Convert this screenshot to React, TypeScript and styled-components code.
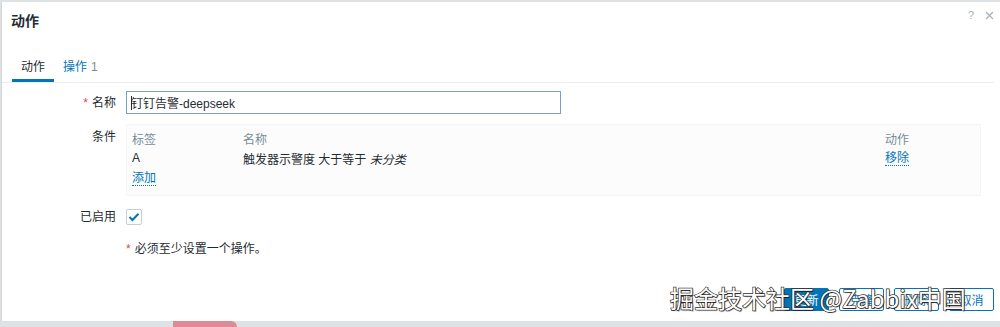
import React from 'react';
import styled, { createGlobalStyle } from 'styled-components';

const colors = {
  text: '#1f2c33',
  muted: '#768d99',
  link: '#0275b8',
  border: '#ebeef0',
  required: '#d64e4e',
};

const font = '"Liberation Sans", Arial, "Noto Sans CJK SC", sans-serif';

const GlobalStyle = createGlobalStyle`
  html, body {
    margin: 0;
    padding: 0;
    background: #dfe2e5;
  }
  body {
    font-family: ${font};
    font-size: 12px;
    color: ${colors.text};
  }
`;

const Page = styled.div`
  position: relative;
  width: 1000px;
  height: 327px;
  overflow: hidden;
  display: flex;
  flex-direction: column;
  background: #dfe2e5;
`;

const Dialog = styled.div`
  margin: 2px 0 0 1px;
  width: 999px;
  height: 319px;
  box-sizing: border-box;
  background: #fff;
  border-left: 1px solid #d2d6d9;
  display: flex;
  flex-direction: column;
`;

const Header = styled.div`
  height: 36px;
  display: flex;
  align-items: flex-start;
  justify-content: space-between;
  padding: 0 6px 0 9px;
`;

const Title = styled.h4`
  margin: 11px 0 0;
  font-size: 14px;
  line-height: 16px;
  font-weight: bold;
`;

const HeaderIcons = styled.div`
  display: flex;
  align-items: center;
  gap: 11px;
  margin-top: 7px;
  color: #a8b3b9;
  font-size: 11px;
`;

const TabBar = styled.div`
  display: flex;
  margin: 15px 6px 0 0;
  padding-left: 10px;
  border-bottom: 1px solid ${colors.border};
`;

const Tab = styled.div<{ $active?: boolean }>`
  padding: 6px 9px 4px;
  line-height: 16px;
  border-bottom: 3px solid ${(p) => (p.$active ? colors.link : 'transparent')};
  color: ${(p) => (p.$active ? colors.text : colors.link)};
`;

const Count = styled.span`
  color: ${colors.muted};
  margin-left: 4px;
`;

const Form = styled.div`
  display: flex;
  flex-direction: column;
  padding-top: 8px;
`;

const Row = styled.div<{ $gap?: number; $center?: boolean }>`
  display: flex;
  align-items: ${(p) => (p.$center ? 'center' : 'flex-start')};
  margin-bottom: ${(p) => p.$gap ?? 10}px;
`;

const Label = styled.div<{ $pt?: number }>`
  width: 114px;
  flex-shrink: 0;
  text-align: right;
  padding-right: 10px;
  padding-top: ${(p) => p.$pt ?? 0}px;
  line-height: 16px;
`;

const Star = styled.span`
  color: ${colors.required};
  margin-right: 4px;
`;

const Input = styled.div`
  width: 435px;
  height: 23px;
  box-sizing: border-box;
  border: 1px solid #7aa0c0;
  padding: 0 4px;
  display: flex;
  align-items: center;
  font-size: 12px;
`;

const Caret = styled.span`
  display: inline-block;
  width: 1px;
  height: 14px;
  background: ${colors.text};
  margin-right: -1px;
`;

const ConditionBox = styled.div`
  width: 855px;
  box-sizing: border-box;
  padding: 3px 5px 7px;
  background: #fcfcfc;
  border: 1px solid #f4f5f6;
`;

const Grid = styled.div`
  display: grid;
  grid-template-columns: 111px 642px 1fr;
  grid-auto-rows: 20px;
  align-items: center;
`;

const Head = styled.div`
  color: ${colors.muted};
`;

const Link = styled.span`
  color: ${colors.link};
  border-bottom: 1px dotted ${colors.link};
  line-height: 14px;
  justify-self: start;
`;

const Checkbox = styled.div`
  width: 16px;
  height: 16px;
  box-sizing: border-box;
  border: 1px solid #c5ced3;
  border-radius: 2px;
  display: flex;
  align-items: center;
  justify-content: center;
`;

const Note = styled.div`
  margin-left: 124px;
  line-height: 16px;
`;

const Spacer = styled.div`
  flex: 1;
`;

const Footer = styled.div`
  display: flex;
  justify-content: flex-end;
  gap: 10px;
  padding: 0 6px 10px 0;
`;

const Button = styled.button<{ $primary?: boolean }>`
  height: 23px;
  min-width: 45px;
  padding: 0 8px;
  font-family: ${font};
  font-size: 12px;
  border-radius: 2px;
  border: 1px solid ${colors.link};
  background: ${(p) => (p.$primary ? colors.link : '#fff')};
  color: ${(p) => (p.$primary ? '#fff' : colors.link)};
`;

const Backdrop = styled.div`
  flex: 1;
  display: flex;
  padding-left: 173px;
`;

const Pink = styled.div`
  width: 64px;
  background: #e08b93;
  border-radius: 0 6px 0 0;
`;

const Watermark = styled.div`
  position: absolute;
  left: 670px;
  top: 283px;
  font-family: "Noto Sans CJK SC", "Noto Sans", sans-serif;
  font-size: 24px;
  line-height: 30px;
  color: #fff;
  -webkit-text-stroke: 1.4px #333;
  paint-order: stroke fill;
  text-shadow: 1px 1px 1px rgba(0, 0, 0, 0.5);
  white-space: nowrap;
`;

const Check = () => (
  <svg width="12" height="10" viewBox="0 0 12 10">
    <path d="M1.5 5 L4.5 8 L10.5 1.8" fill="none" stroke={colors.link} strokeWidth="2" />
  </svg>
);

const Close = () => (
  <svg width="9" height="9" viewBox="0 0 9 9">
    <path d="M1 1 L8 8 M8 1 L1 8" stroke="#a8b3b9" strokeWidth="1.3" />
  </svg>
);

const App = () => (
  <Page>
    <GlobalStyle />
    <Dialog>
      <Header>
        <Title>动作</Title>
        <HeaderIcons>
          <span>?</span>
          <Close />
        </HeaderIcons>
      </Header>
      <TabBar>
        <Tab $active>动作</Tab>
        <Tab>
          操作<Count>1</Count>
        </Tab>
      </TabBar>
      <Form>
        <Row $center>
          <Label>
            <Star>*</Star>名称
          </Label>
          <Input>
            <Caret />
            钉钉告警-deepseek
          </Input>
        </Row>
        <Row $gap={13}>
          <Label $pt={5}>条件</Label>
          <ConditionBox>
            <Grid>
              <Head>标签</Head>
              <Head>名称</Head>
              <Head>动作</Head>
              <div>A</div>
              <div>
                触发器示警度 大于等于 <i>未分类</i>
              </div>
              <Link>移除</Link>
              <Link>添加</Link>
            </Grid>
          </ConditionBox>
        </Row>
        <Row $center $gap={16}>
          <Label>已启用</Label>
          <Checkbox>
            <Check />
          </Checkbox>
        </Row>
        <Note>
          <Star>*</Star>必须至少设置一个操作。
        </Note>
      </Form>
      <Spacer />
      <Footer>
        <Button $primary>更新</Button>
        <Button>克隆</Button>
        <Button>删除</Button>
        <Button>取消</Button>
      </Footer>
    </Dialog>
    <Backdrop>
      <Pink />
    </Backdrop>
    <Watermark>掘金技术社区 @Zabbix中国</Watermark>
  </Page>
);

export default App;
